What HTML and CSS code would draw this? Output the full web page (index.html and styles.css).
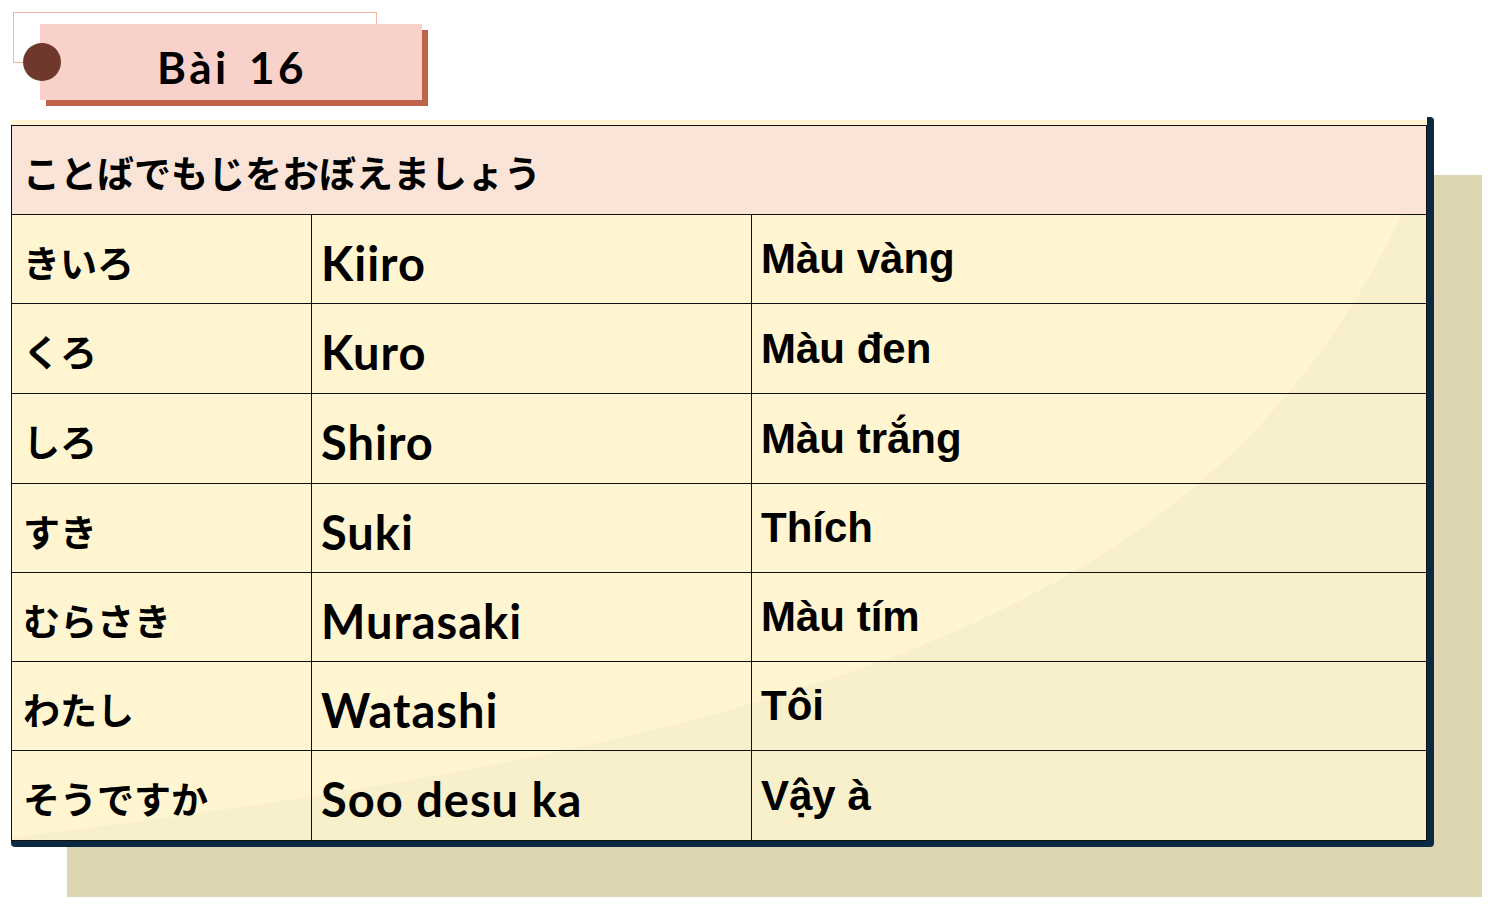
FILE: index.html
```html
<!DOCTYPE html>
<html lang="vi">
<head>
<meta charset="utf-8">
<title>Bài 16</title>
<link rel="stylesheet" href="styles.css">
</head>
<body>
<div class="title-area">
  <div class="outline"></div>
  <div class="tab">
    <span class="dot"></span>
    <span class="tab-text">Bài 16</span>
  </div>
</div>
<div class="board">
  <div class="beige"></div>
  <div class="frame">
    <div class="sheet">
      <svg class="curve" width="1416" height="720" viewBox="0 0 1416 720" aria-hidden="true">
        <path d="M1440 0 L1391 94 C1203 489 818 618 4 717 L0 720 L1440 720 Z" fill="#f8efcb"/>
      </svg>
      <div class="grid">
        <div class="head">ことばでもじをおぼえましょう</div>

        <div class="c jp">きいろ</div><div class="c ro">Kiiro</div><div class="c vi">Màu vàng</div>
        <div class="c jp">くろ</div><div class="c ro">Kuro</div><div class="c vi">Màu đen</div>
        <div class="c jp">しろ</div><div class="c ro">Shiro</div><div class="c vi">Màu trắng</div>
        <div class="c jp">すき</div><div class="c ro">Suki</div><div class="c vi">Thích</div>
        <div class="c jp">むらさき</div><div class="c ro">Murasaki</div><div class="c vi">Màu tím</div>
        <div class="c jp">わたし</div><div class="c ro">Watashi</div><div class="c vi">Tôi</div>
        <div class="c jp last">そうですか</div><div class="c ro last">Soo desu ka</div><div class="c vi last">Vậy à</div>
      </div>
    </div>
  </div>
</div>
</body>
</html>
```

FILE: styles.css
```css
* { box-sizing: border-box; }
html, body { margin: 0; padding: 0; background: #ffffff; }
body { width: 1510px; height: 904px; overflow: hidden; font-family: "Noto Sans CJK JP", sans-serif; color: #000; }

.title-area { position: relative; height: 117px; padding-top: 24px; padding-left: 40px; }
.outline { position: absolute; left: 13px; top: 12px; width: 364px; height: 51px; border: 1px solid #f4b39b; }
.tab { position: relative; width: 382px; height: 76px; background: #f8d2ca; box-shadow: 6px 6px 0 #bf624a; display: flex; align-items: center; justify-content: center; padding: 10px 0 0 2px; }
.dot { position: absolute; left: -17px; top: 19px; width: 38px; height: 38px; border-radius: 50%; background: #6e392c; }
.tab-text { font-family: "Lato", sans-serif; font-weight: 700; font-size: 44px; line-height: 1; letter-spacing: 3.5px; word-spacing: 5px; }

.board { position: relative; margin-left: 11px; }
.beige { position: absolute; left: 56px; top: 58px; width: 1415px; height: 722px; background: #ded5b3; }
.frame { position: relative; width: 1423px; border-right: 7px solid #0b2941; border-bottom: 6px solid #0b2941; border-radius: 0 4px 4px 4px; padding-top: 3px; }
.sheet { position: relative; width: 1416px; background: #fff5d0; padding-top: 5px; }
.curve { position: absolute; left: 0; top: 0; display: block; }

.grid { position: relative; display: grid; grid-template-columns: 300px 440px 1fr; grid-template-rows: 89px 89px 90px 90px 89px 89px 89px 89px; border: 1px solid #111; }
.head { grid-column: 1 / 4; background: #fae4d8; border-bottom: 1px solid #111; display: flex; align-items: center; padding: 4px 0 0 11px; font-size: 37px; font-weight: 700; line-height: 1; white-space: nowrap; }
.c { display: flex; align-items: center; border-bottom: 1px solid #111; border-right: 1px solid #111; line-height: 1; white-space: nowrap; }
.c.vi { border-right: 0; }
.c.last { border-bottom: 0; }
.jp { padding: 6px 0 0 11px; font-size: 37px; font-weight: 700; }
.ro { padding: 8px 0 0 9px; font-family: "Lato", sans-serif; font-weight: 700; font-size: 47px; letter-spacing: 1px; }
.vi { padding: 0 0 0 9px; font-family: "Liberation Sans", Arial, sans-serif; font-weight: 700; font-size: 42px; }
```
